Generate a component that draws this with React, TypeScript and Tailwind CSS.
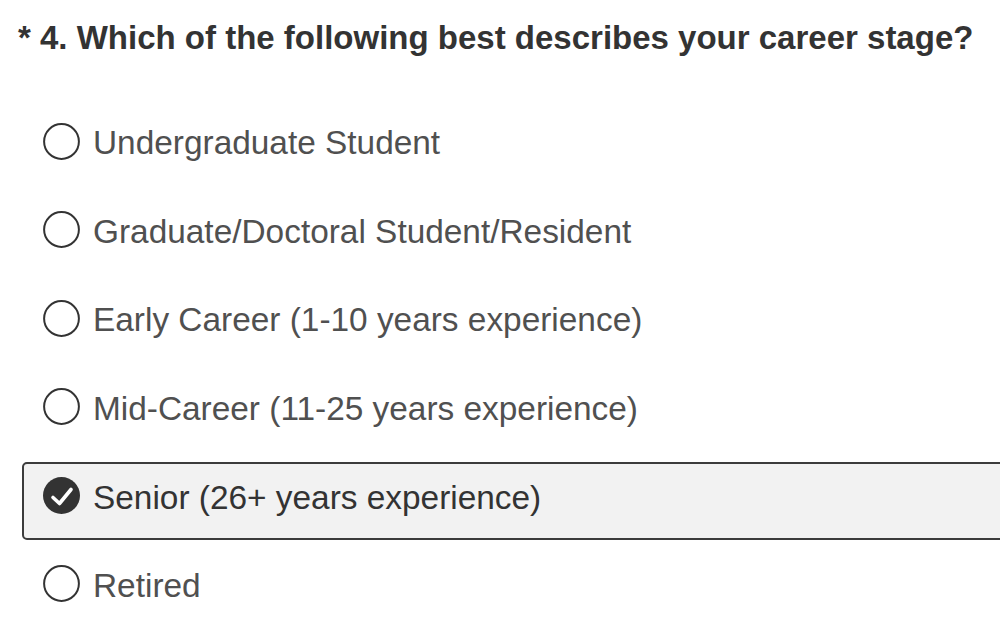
import React from "react";

const OPTIONS = [
  "Undergraduate Student",
  "Graduate/Doctoral Student/Resident",
  "Early Career (1-10 years experience)",
  "Mid-Career (11-25 years experience)",
  "Senior (26+ years experience)",
  "Retired",
];

const SELECTED = 4;

function Radio({ checked }: { checked: boolean }) {
  if (checked) {
    return (
      <svg width="37" height="37" viewBox="0 0 37 37" className="shrink-0">
        <circle cx="18.5" cy="18.5" r="18.5" fill="#333333" />
        <path
          d="M10 20.5 L16.5 26.5 L28 12.5"
          fill="none"
          stroke="#ffffff"
          strokeWidth="3.6"
          strokeLinecap="round"
          strokeLinejoin="round"
        />
      </svg>
    );
  }
  return (
    <svg width="37" height="37" viewBox="0 0 37 37" className="shrink-0">
      <circle cx="18.5" cy="18.5" r="17.4" fill="#ffffff" stroke="#333333" strokeWidth="2" />
    </svg>
  );
}

export default function App() {
  return (
    <div
      className="h-[642px] w-[1000px] overflow-hidden bg-white"
      style={{ fontFamily: '"Liberation Sans", Arial, sans-serif' }}
    >
      <h1 className="pl-[18px] pt-[18px] text-[33px] leading-[40px] font-bold whitespace-nowrap text-[#333333]">
        * 4. Which of the following best describes your career stage?
      </h1>

      <div className="mt-[49.5px] flex flex-col gap-[10.6px] pl-[22px]">
        {OPTIONS.map((label, i) => {
          const checked = i === SELECTED;
          return (
            <div
              key={label}
              className={
                checked
                  ? "flex h-[78px] w-[1000px] items-center gap-[13px] rounded-[5px] border-2 border-[#3c3c3c] bg-[#f2f2f2] pb-[11px] pl-[19px]"
                  : "flex h-[78px] w-[1000px] items-center gap-[13px] rounded-[5px] border-2 border-transparent pb-[11px] pl-[19px]"
              }
            >
              <Radio checked={checked} />
              <span
                className={
                  checked
                    ? "mt-[4px] text-[33.4px] leading-none whitespace-nowrap text-[#333333]"
                    : "mt-[4px] text-[33.4px] leading-none whitespace-nowrap text-[#505050]"
                }
              >
                {label}
              </span>
            </div>
          );
        })}
      </div>
    </div>
  );
}
